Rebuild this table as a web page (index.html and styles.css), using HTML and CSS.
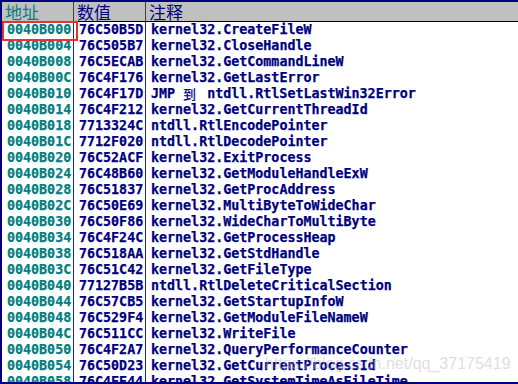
FILE: index.html
```html
<!DOCTYPE html>
<html lang="zh-CN">
<head>
  <meta charset="UTF-8" />
  <title>导入表</title>
  <link rel="stylesheet" href="styles.css">
</head>
<body>
  <div class="dump">
    <div class="dump-head">
      <div class="cell col-addr">地址</div>
      <div class="cell col-val">数值</div>
      <div class="cell col-note">注释</div>
    </div>
    <div class="dump-body" id="rows"></div>
    <div class="selected-box"></div>
    <div class="watermark">https://blog.csdn.net/qq_37175419</div>
  </div>

<script>
const rows = [
  ['0040B000', '76C50B5D', 'kernel32.CreateFileW'],
  ['0040B004', '76C505B7', 'kernel32.CloseHandle'],
  ['0040B008', '76C5ECAB', 'kernel32.GetCommandLineW'],
  ['0040B00C', '76C4F176', 'kernel32.GetLastError'],
  ['0040B010', '76C4F17D', 'JMP <span class="wide">到</span> ntdll.RtlSetLastWin32Error'],
  ['0040B014', '76C4F212', 'kernel32.GetCurrentThreadId'],
  ['0040B018', '7713324C', 'ntdll.RtlEncodePointer'],
  ['0040B01C', '7712F020', 'ntdll.RtlDecodePointer'],
  ['0040B020', '76C52ACF', 'kernel32.ExitProcess'],
  ['0040B024', '76C48B60', 'kernel32.GetModuleHandleExW'],
  ['0040B028', '76C51837', 'kernel32.GetProcAddress'],
  ['0040B02C', '76C50E69', 'kernel32.MultiByteToWideChar'],
  ['0040B030', '76C50F86', 'kernel32.WideCharToMultiByte'],
  ['0040B034', '76C4F24C', 'kernel32.GetProcessHeap'],
  ['0040B038', '76C518AA', 'kernel32.GetStdHandle'],
  ['0040B03C', '76C51C42', 'kernel32.GetFileType'],
  ['0040B040', '77127B5B', 'ntdll.RtlDeleteCriticalSection'],
  ['0040B044', '76C57CB5', 'kernel32.GetStartupInfoW'],
  ['0040B048', '76C529F4', 'kernel32.GetModuleFileNameW'],
  ['0040B04C', '76C511CC', 'kernel32.WriteFile'],
  ['0040B050', '76C4F2A7', 'kernel32.QueryPerformanceCounter'],
  ['0040B054', '76C50D23', 'kernel32.GetCurrentProcessId'],
  ['0040B058', '76C4FE44', 'kernel32.GetSystemTimeAsFileTime']
];

const body = document.getElementById('rows');
body.innerHTML = rows.map(([addr, val, note]) =>
  `<div class="row"><div class="cell col-addr">${addr}</div><div class="cell col-val">${val}</div><div class="cell col-note">${note}</div></div>`
).join('');
</script>
</body>
</html>
```

FILE: styles.css
```css
*, *::before, *::after {
  box-sizing: border-box;
}

html, body {
  margin: 0;
  padding: 0;
  overflow: hidden;
  background: #ffffff;
}

.dump {
  position: relative;
  width: 518px;
  height: 384px;
  border-top: 2px solid #000080;
  border-left: 2px solid #000080;
  border-bottom: 2px solid #000080;
  display: flex;
  flex-direction: column;
  overflow: hidden;
}

.dump-head {
  display: flex;
  height: 20px;
  flex-shrink: 0;
  background-color: #c0c0c0;
  border-bottom: 1px solid #000000;
  font-family: "Noto Sans CJK SC", sans-serif;
  font-size: 17px;
  line-height: 19px;
  color: #000000;
}

.dump-head .cell {
  padding-left: 3px;
  overflow: visible;
  border-right-color: #404040;
}

.dump-body {
  flex: 1;
  overflow: hidden;
  font-family: "DejaVu Sans Mono", "Liberation Mono", monospace;
  font-weight: bold;
  font-size: 13.33px;
  line-height: 16px;
  -webkit-text-stroke: 0.25px currentColor;
}

.row {
  display: flex;
  height: 16px;
}

.cell {
  white-space: nowrap;
  overflow: hidden;
  padding-left: 5px;
  border-right: 1px solid #2020c0;
}

.col-addr {
  width: 72px;
  color: #008080;
}

.col-val {
  width: 72px;
  color: #000080;
}

.col-note {
  flex: 1;
  color: #000080;
  border-right: none;
}

.wide {
  display: inline-block;
  width: 16px;
  height: 16px;
  vertical-align: top;
  font-family: "Noto Sans CJK SC", sans-serif;
  font-weight: normal;
  font-size: 13px;
  line-height: 16px;
}

.selected-box {
  position: absolute;
  left: 0;
  top: 19px;
  width: 76px;
  height: 20px;
  border: 2px solid #e8322f;
}

.watermark {
  position: absolute;
  left: 263px;
  top: 353px;
  font-family: "Liberation Sans", Arial, sans-serif;
  font-size: 16px;
  color: rgba(190, 190, 190, 0.5);
  white-space: nowrap;
  -webkit-text-stroke: 0;
}
```
